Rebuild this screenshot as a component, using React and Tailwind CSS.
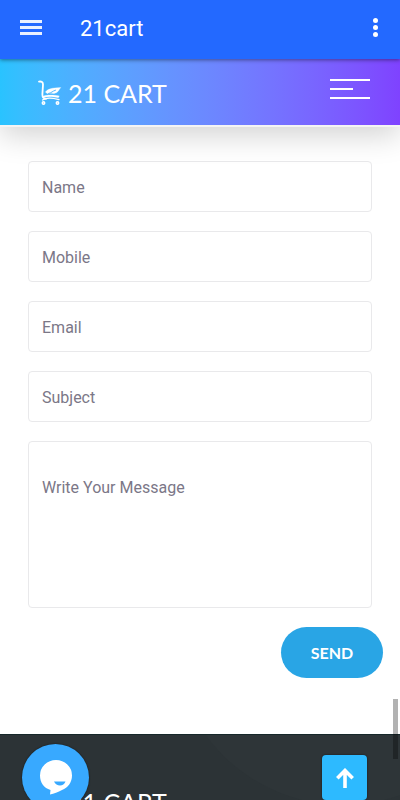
import { useState } from 'react'

const FIELDS = [
  { name: 'name', label: 'Name', type: 'text' },
  { name: 'mobile', label: 'Mobile', type: 'tel' },
  { name: 'email', label: 'Email', type: 'email' },
  { name: 'subject', label: 'Subject', type: 'text' },
]

const inputClass =
  'block w-full rounded border border-[#e9e9eb] bg-white px-[13px] text-base text-[#7b7787] outline-none placeholder:text-[#7b7787]'

const Logo = () => (
  <a href="#home" aria-label="21 Cart" className="flex items-center gap-[6px] text-white">
    <svg viewBox="0 0 24 26" className="h-[26px] w-6" fill="none" stroke="currentColor" strokeLinecap="round" strokeLinejoin="round">
      <path d="M1 1.600c2.600-.4 4 .5 4 3l-.6 9.500c-.1 3.300.6 4.500 3.600 4.800" strokeWidth="1.800" />
      <path d="M4.500 20c4-2.600 10-2.100 16.500-.3" strokeWidth="1.300" />
      <path d="M5 16.200c5.500-1.600 10-1.200 16.300-.3l-1 1.800C14 16.500 9.500 16.500 5 17.600Z" fill="currentColor" strokeWidth=".3" />
      <path d="M7.500 12c2-3 6-4.200 15.300-4.500-2.300 3-3 5.400-6.500 5.900-2.600.3-4-.7-5.500.4-1.300-.1-2.500-.5-3.300-1.800Z" fill="currentColor" strokeWidth=".3" />
      <path d="M10.500 13.500c3-.5 4-2.500 7-3.300" stroke="#3fb0ff" strokeWidth=".9" />
      <circle cx="5.500" cy="23" r="1.200" strokeWidth="1.500" />
      <circle cx="19.500" cy="23" r="1.200" strokeWidth="1.500" />
    </svg>
    <span className="font-['Lato',sans-serif] text-[25px] leading-[26px] font-normal whitespace-nowrap">21 CART</span>
  </a>
)

const AppBar = () => (
  <div className="relative z-20 flex h-[59px] shrink-0 items-center bg-[#2369ff] pr-[22px] pl-[20px] text-white shadow-[0_1px_4px_rgba(0,0,0,0.45)]">
    <button type="button" aria-label="Open menu" className="-mt-1 flex w-[22px] flex-col gap-[3px]">
      <span className="h-[3px] bg-white/90" />
      <span className="h-[3px] bg-white/90" />
      <span className="h-[3px] bg-white/90" />
    </button>
    <h1 className="-mt-[2px] ml-[38px] flex-1 text-[22px] leading-7 font-normal">21cart</h1>
    <button type="button" aria-label="More options" className="-mt-1 flex flex-col gap-[2px]">
      <span className="size-[5px] rounded-full bg-white" />
      <span className="size-[5px] rounded-full bg-white" />
      <span className="size-[5px] rounded-full bg-white" />
    </button>
  </div>
)

const SiteHeader = () => (
  <header className="relative z-10 flex h-[66px] shrink-0 items-center justify-between bg-linear-to-r from-[#29c3ff] to-[#7f42ff] pt-[2px] pr-[30px] pl-[38px] shadow-[0_2px_0_#f4f4f4,0_10px_30px_rgba(0,0,0,0.18)]">
    <Logo />
    <button type="button" aria-label="Toggle navigation" className="-mt-2 flex w-10 flex-col gap-[7px]">
      <span className="h-[2px] bg-white" />
      <span className="h-[2px] w-[23px] bg-white" />
      <span className="h-[2px] bg-white" />
    </button>
  </header>
)

const ContactForm = () => {
  const [values, setValues] = useState({ name: '', mobile: '', email: '', subject: '', message: '' })

  const onChange = (event) => {
    setValues({ ...values, [event.target.name]: event.target.value })
  }

  return (
    <form className="px-7 pt-9" onSubmit={(event) => event.preventDefault()}>
      <div className="space-y-[19px]">
        {FIELDS.map((field) => (
          <input
            key={field.name}
            type={field.type}
            name={field.name}
            aria-label={field.label}
            placeholder={field.label}
            value={values[field.name]}
            onChange={onChange}
            className={`${inputClass} h-[51px] pt-[2px]`}
          />
        ))}
        <textarea
          name="message"
          aria-label="Write Your Message"
          placeholder="Write Your Message"
          value={values.message}
          onChange={onChange}
          className={`${inputClass} h-[167px] resize-none pt-[34px]`}
        />
      </div>
      <div className="-mr-[11px] mt-[19px] flex justify-end">
        <button type="submit" className="h-[51px] w-[102px] rounded-full bg-[#29a5e5] font-['Lato',sans-serif] text-base font-bold text-white">
          SEND
        </button>
      </div>
    </form>
  )
}

const SiteFooter = () => (
  <footer className="relative mt-14 min-h-[120px] overflow-hidden border-t border-[#16282a] bg-[#2c3336] pt-[54px] pl-[38px]">
    <div className="absolute -top-[270px] left-[173px] size-[340px] rounded-full bg-[#2e3538]" />
    <Logo />
  </footer>
)

const ChatButton = () => (
  <button type="button" aria-label="Open chat" className="fixed -bottom-[11px] left-[22px] z-30 flex size-[67px] items-center justify-center rounded-full bg-[#38a9ff] shadow-[0_0_2px_rgba(0,0,0,0.6)]">
    <svg viewBox="0 0 32 35" className="h-[35px] w-8">
      <path d="M16 0a16 15.500 0 0 1 16 15.500c0 7-4 12-10 14.500-4 2-8 3.600-12 4.500l.5-4.500C4 28 0 22.500 0 15.500A16 15.500 0 0 1 16 0Z" fill="#fff" />
      <path d="M14 21.500h11.500c-1 2.700-3 4-5.500 4s-4.800-1.300-6-4Z" fill="#38a9ff" />
    </svg>
  </button>
)

const BackToTop = () => (
  <button type="button" aria-label="Back to top" className="fixed right-[33px] bottom-0 z-30 flex size-[45px] items-center justify-center rounded bg-[#2dbaff] shadow-[0_0_2px_rgba(0,0,0,0.6)]">
    <svg viewBox="0 0 18 20" className="h-5 w-[18px]" fill="none" stroke="#fff" strokeWidth="3.600">
      <path d="M9 20V2.500M1.300 10.200 9 2.500l7.700 7.700" />
    </svg>
  </button>
)

const App = () => (
  <div className="flex h-screen flex-col overflow-hidden bg-white font-['Roboto',sans-serif]">
    <AppBar />
    <SiteHeader />
    <main className="min-h-0 flex-1">
      <ContactForm />
      <SiteFooter />
    </main>
    <ChatButton />
    <BackToTop />
    <div className="fixed right-[2px] bottom-[41px] z-30 h-[60px] w-[5px] bg-black/30" />
  </div>
)

export default App
